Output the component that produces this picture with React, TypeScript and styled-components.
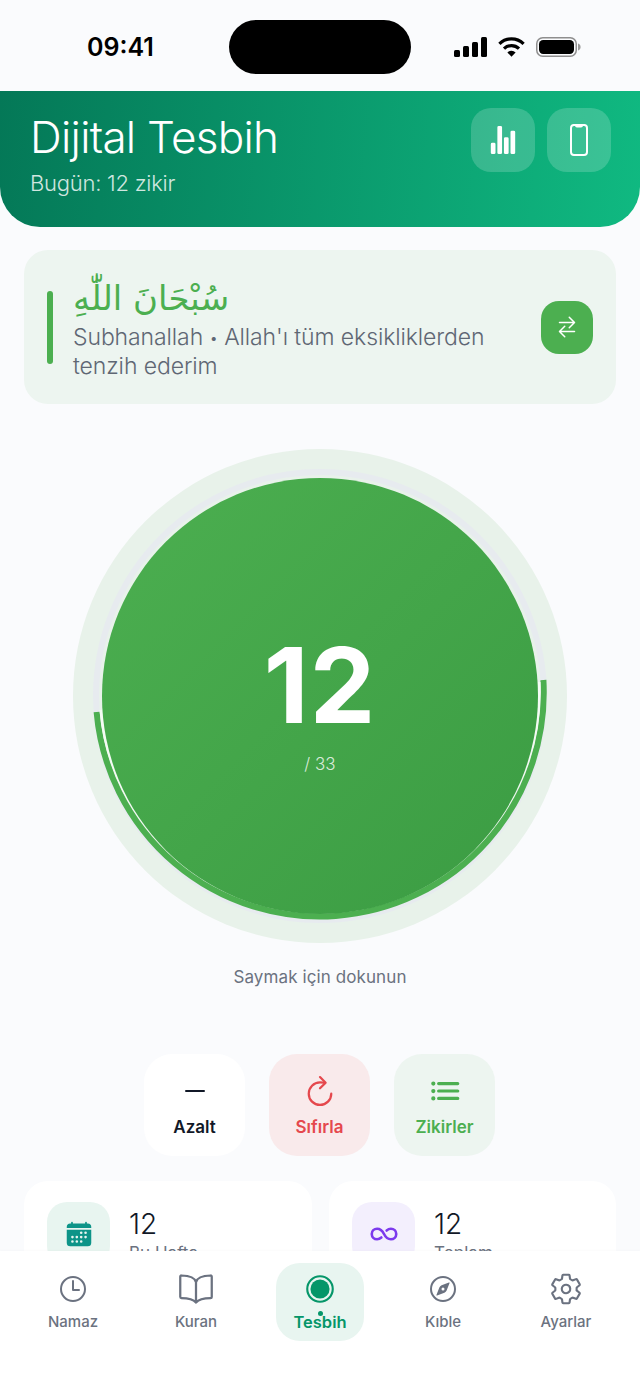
import React from "react";
import styled, { createGlobalStyle } from "styled-components";
import {
  IoBookOutline, IoCalendar, IoCompassOutline, IoInfinite, IoList, IoPhonePortraitOutline, IoRadioButtonOn,
  IoRefreshOutline, IoRemove, IoSettingsOutline, IoStatsChart, IoSwapHorizontalOutline, IoTimeOutline,
} from "react-icons/io5";

const Global = createGlobalStyle`
  html, body { margin: 0; padding: 0; background: #fafbfd; }
  body { font-family: Inter, "Noto Sans", sans-serif; }
  * { box-sizing: border-box; }
`;
const Screen = styled.div`
  position: relative; width: 640px; height: 1391px; overflow: hidden; background: #fafbfd; color: #111827;
`;
const StatusBar = styled.div`
  height: 91px; display: flex; align-items: flex-start; padding: 20px 0 0 87px;
`;
const Time = styled.div`
  width: 142px; font-size: 25px; font-weight: 600; line-height: 54px; color: #000;
`;
const Island = styled.div`
  width: 182px; height: 54px; border-radius: 27px; background: #000;
`;
const StatusIcons = styled.div`
  margin-left: 43px; height: 54px; display: flex; align-items: center; gap: 11px;
`;
const Header = styled.header`
  height: 136px; padding: 17px 29px 0 30px; display: flex; justify-content: space-between; align-items: flex-start;
  background: linear-gradient(95deg, #047857 0%, #10b981 100%);
  border-radius: 0 0 40px 40px;
`;
const HeaderText = styled.div`
  display: flex; flex-direction: column; color: #fff;
`;
const Title = styled.h1`
  margin: 0; font-size: 44px; font-weight: 300; line-height: 58px; letter-spacing: -0.7px;
`;
const Subtitle = styled.div`
  margin-top: 3px; font-size: 22px; font-weight: 300; line-height: 28px; letter-spacing: -0.25px; color: rgba(255,255,255,.82);
`;
const HeaderButtons = styled.div`
  display: flex; gap: 12px;
`;
const GlassButton = styled.div`
  width: 64px; height: 64px; border-radius: 20px; background: rgba(255,255,255,.18); color: #fff;
  display: flex; align-items: center; justify-content: center;
`;
const DhikrCard = styled.section`
  margin: 23px 24px 0; height: 154px; border-radius: 24px; background: #edf5f0;
  display: flex; align-items: center; padding: 0 23px;
`;
const Accent = styled.div`
  width: 6px; height: 73px; border-radius: 3px; background: #4caf50; flex: none;
`;
const DhikrText = styled.div`
  flex: 1; margin-left: 20px; min-width: 0;
`;
const Arabic = styled.div`
  font-family: "DejaVu Sans", sans-serif; font-size: 34px; line-height: 48px; color: #4caf50;
  text-align: left; direction: rtl; unicode-bidi: plaintext;
`;
const Meaning = styled.div`
  margin-top: 1px; width: 440px; font-size: 23px; font-weight: 300; line-height: 28px; letter-spacing: -0.1px; color: #5f6774;
`;
const Bullet = styled.span`
  font-size: 15px; vertical-align: 2px;
`;
const SwapButton = styled.div`
  width: 52px; height: 53px; border-radius: 18px; background: #4caf50; flex: none;
  display: flex; align-items: center; justify-content: center; color: #fff;
`;
const CounterArea = styled.section`
  margin-top: 45px; display: flex; flex-direction: column; align-items: center;
`;
const Halo = styled.div`
  position: relative; width: 494px; height: 494px; border-radius: 50%; background: #e8f2ea;
  display: flex; align-items: center; justify-content: center;
`;
const RingSvg = styled.svg`
  position: absolute; inset: 0;
`;
const TapCircle = styled.div`
  position: relative; width: 436px; height: 436px; border-radius: 50%;
  background: linear-gradient(135deg, #4caf50 0%, #3b9c43 100%);
  display: flex; flex-direction: column; align-items: center; color: #fff;
`;
const Count = styled.div`
  margin-top: 146px; font-size: 104px; font-weight: 700; line-height: 122px; letter-spacing: 1px;
`;
const Target = styled.div`
  margin-top: 7px; font-size: 17px; font-weight: 300; line-height: 22px; color: rgba(255,255,255,.8);
`;
const Hint = styled.div`
  margin-top: 23px; font-size: 17px; line-height: 22px; letter-spacing: .1px; color: #6b7280;
`;
const Actions = styled.div`
  margin-top: 66px; padding-right: 1px; display: flex; justify-content: center; gap: 24px;
`;
const ActionButton = styled.div<{ $bg: string; $fg: string }>`
  width: 101px; height: 102px; border-radius: 28px; background: ${p => p.$bg}; color: ${p => p.$fg};
  display: flex; flex-direction: column; align-items: center; padding-top: 20px;
`;
const ActionIcon = styled.div`
  height: 34px; display: flex; align-items: center; justify-content: center;
`;
const ActionLabel = styled.div`
  margin-top: 8px; font-size: 17px; font-weight: 600; line-height: 22px;
`;
const Stats = styled.div`
  margin: 25px 24px 0; display: grid; grid-template-columns: 288px 287px; gap: 17px;
`;
const StatCard = styled.div`
  height: 110px; border-radius: 24px; background: #fff; padding: 21px 23px; display: flex; gap: 19px;
`;
const StatIcon = styled.div<{ $bg: string; $fg: string }>`
  width: 63px; height: 64px; border-radius: 20px; background: ${p => p.$bg}; color: ${p => p.$fg};
  display: flex; align-items: center; justify-content: center; flex: none;
`;
const StatValue = styled.div`
  margin-top: 5px; font-size: 28px; font-weight: 300; line-height: 34px; color: #111827;
`;
const StatLabel = styled.div`
  margin-top: 1px; font-size: 17px; line-height: 22px; color: #6b7280;
`;
const Nav = styled.nav`
  position: absolute; left: 0; right: 0; bottom: 0; height: 140px; background: #fff;
  box-shadow: 0 -1px 2px rgba(0,0,0,.02);
`;
const NavItem = styled.div<{ $x: number; $active?: boolean }>`
  position: absolute; top: 12px; left: ${p => p.$x - 44}px; width: 88px; height: 78px; padding-top: 9px;
  display: flex; flex-direction: column; align-items: center; border-radius: 24px;
  background: ${p => (p.$active ? "#e8f5f0" : "transparent")};
  color: ${p => (p.$active ? "#059669" : "#6b7280")};
`;
const NavIconBox = styled.div`
  height: 34px; display: flex; align-items: center; justify-content: center;
`;
const NavLabel = styled.div<{ $active?: boolean }>`
  margin-top: 6px; font-size: ${p => (p.$active ? 16.5 : 15)}px; font-weight: ${p => (p.$active ? 600 : 500)};
  line-height: 20px; white-space: nowrap;
`;
const NavDot = styled.div`
  position: absolute; top: 48px; left: 42px; width: 5px; height: 5px; border-radius: 50%; background: #059669;
`;

const Signal = () => (
  <svg width="33" height="20" viewBox="0 0 33 20" fill="#000">
    <rect x="0" y="13" width="6" height="7" rx="1.5" /><rect x="9" y="9" width="6" height="11" rx="1.5" />
    <rect x="18" y="5" width="6" height="15" rx="1.5" /><rect x="27" y="0" width="6" height="20" rx="1.5" />
  </svg>
);
const Wifi = () => (
  <svg width="27" height="20" viewBox="0 0 27 20" fill="none" stroke="#000" strokeWidth="3.2">
    <path d="M1.4 6.8a17.2 17.2 0 0 1 24.2 0" /><path d="M6 11.6a10.8 10.8 0 0 1 15 0" />
    <path d="M13.5 19.8 9.4 15.4a6 6 0 0 1 8.2 0z" fill="#000" stroke="none" />
  </svg>
);
const Battery = () => (
  <svg width="45" height="20" viewBox="0 0 45 20">
    <rect x="0.75" y="0.75" width="39.5" height="18.5" rx="6" fill="none" stroke="#8e8e8e" strokeWidth="1.5" />
    <rect x="3" y="3" width="35" height="14" rx="4.2" fill="#000" />
    <path d="M42 6.5c1.6.4 2.6 1.8 2.6 3.5s-1 3.1-2.6 3.5z" fill="#9a9a9a" />
  </svg>
);

const navItems = [
  { x: 73, label: "Namaz", icon: <IoTimeOutline size={32} /> },
  { x: 196, label: "Kuran", icon: <IoBookOutline size={36} /> },
  { x: 320, label: "Tesbih", icon: <IoRadioButtonOn size={34} />, active: true },
  { x: 443, label: "Kıble", icon: <IoCompassOutline size={32} /> },
  { x: 566, label: "Ayarlar", icon: <IoSettingsOutline size={34} /> },
];

export default function App() {
  return (
    <Screen>
      <Global />
      <StatusBar>
        <Time>09:41</Time>
        <Island />
        <StatusIcons><Signal /><Wifi /><Battery /></StatusIcons>
      </StatusBar>
      <Header>
        <HeaderText>
          <Title>Dijital Tesbih</Title>
          <Subtitle>Bugün: 12 zikir</Subtitle>
        </HeaderText>
        <HeaderButtons>
          <GlassButton><IoStatsChart size={30} /></GlassButton>
          <GlassButton><IoPhonePortraitOutline size={32} /></GlassButton>
        </HeaderButtons>
      </Header>
      <DhikrCard>
        <Accent />
        <DhikrText>
          <Arabic>سُبْحَانَ اللّٰهِ</Arabic>
          <Meaning>Subhanallah <Bullet>•</Bullet> Allah'ı tüm eksikliklerden tenzih ederim</Meaning>
        </DhikrText>
        <SwapButton><IoSwapHorizontalOutline size={24} /></SwapButton>
      </DhikrCard>
      <CounterArea>
        <Halo>
          <RingSvg width="494" height="494" viewBox="0 0 494 494" fill="none">
            <circle cx="247" cy="247" r="224" stroke="#e7ebef" strokeWidth="6" />
            <path d="M470.4 231A224 224 0 0 1 23.6 263" stroke="#4caf50" strokeWidth="6" />
            <path d="M466 233A219.5 219.5 0 0 1 28 261" stroke="#f4fbf4" strokeWidth="3" />
          </RingSvg>
          <TapCircle>
            <Count>12</Count>
            <Target>/ 33</Target>
          </TapCircle>
        </Halo>
        <Hint>Saymak için dokunun</Hint>
      </CounterArea>
      <Actions>
        <ActionButton $bg="#ffffff" $fg="#111827"><ActionIcon><IoRemove size={32} /></ActionIcon><ActionLabel>Azalt</ActionLabel></ActionButton>
        <ActionButton $bg="#f9eaeb" $fg="#e5484d"><ActionIcon><IoRefreshOutline size={36} /></ActionIcon><ActionLabel>Sıfırla</ActionLabel></ActionButton>
        <ActionButton $bg="#edf5f0" $fg="#4caf50"><ActionIcon><IoList size={34} /></ActionIcon><ActionLabel>Zikirler</ActionLabel></ActionButton>
      </Actions>
      <Stats>
        <StatCard>
          <StatIcon $bg="#e8f5f0" $fg="#0d9488"><IoCalendar size={28} /></StatIcon>
          <div><StatValue>12</StatValue><StatLabel>Bu Hafta</StatLabel></div>
        </StatCard>
        <StatCard>
          <StatIcon $bg="#f3effd" $fg="#7c3aed"><IoInfinite size={28} /></StatIcon>
          <div><StatValue>12</StatValue><StatLabel>Toplam</StatLabel></div>
        </StatCard>
      </Stats>
      <Nav>
        {navItems.map(n => (
          <NavItem key={n.label} $x={n.x} $active={n.active}>
            <NavIconBox>{n.icon}</NavIconBox>
            {n.active && <NavDot />}
            <NavLabel $active={n.active}>{n.label}</NavLabel>
          </NavItem>
        ))}
      </Nav>
    </Screen>
  );
}
